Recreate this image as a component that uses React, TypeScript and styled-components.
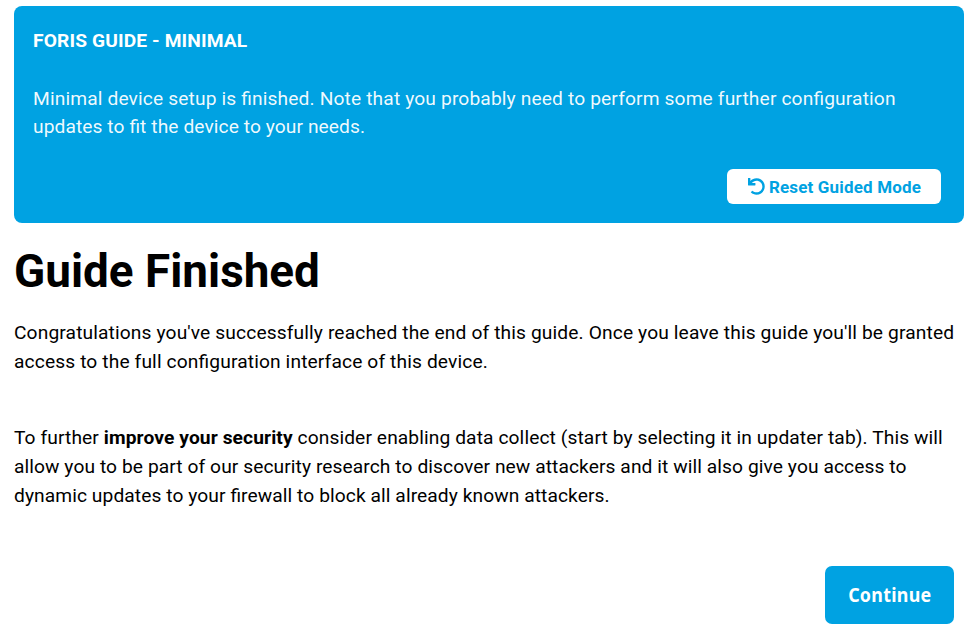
import React from "react";
import styled, { createGlobalStyle } from "styled-components";
import { FaUndo } from "react-icons/fa";

const Global = createGlobalStyle`
  body {
    margin: 0; background: #fff; color: #000;
    font-family: Roboto, sans-serif; font-size: 19.2px;
    font-feature-settings: "liga" 1;
  }
`;
const Page = styled.main`
  box-sizing: border-box; width: 979px; height: 641px; padding: 6px 15px 0 14px; overflow: hidden;
`;
const Panel = styled.section`
  box-sizing: border-box; height: 217px; padding: 20px 23px 19px 19px;
  display: flex; flex-direction: column; border-radius: 8px; background: #00a2e2; color: #fff;
`;
const PanelTitle = styled.div`
  font-weight: 700; letter-spacing: 0.12px; line-height: 29px; text-transform: uppercase;
`;
const PanelText = styled.p`
  margin: 30px 0 0; line-height: 28px; letter-spacing: 0.137px; white-space: nowrap;
  color: rgba(255, 255, 255, 0.95);
`;
const TightLine = styled.span`
  letter-spacing: 0.08px;
`;
const ResetButton = styled.button`
  display: flex; align-items: center; justify-content: center; gap: 4px;
  align-self: flex-end; margin-top: auto; width: 214px; height: 35px; padding: 0 0 0 1px;
  border: 0; border-radius: 6px; background: #fff; color: #00a2e2;
  font: 700 17px Roboto, sans-serif; letter-spacing: 0.16px; white-space: nowrap;
`;
const Title = styled.h1`
  margin: 20px 0 0; font-size: 45.85px; line-height: 56px; font-weight: 700;
`;
const Paragraph = styled.p<{ $gap: number; $spacing: number }>`
  margin: ${(p) => p.$gap}px 0 0; line-height: 29px; white-space: nowrap;
  letter-spacing: ${(p) => p.$spacing}px;
`;
const Actions = styled.div`
  display: flex; justify-content: flex-end; padding: 56px 10px 0 0;
`;
const ContinueButton = styled.button`
  width: 129px; height: 58px; padding: 0 0 1px; border: 0; border-radius: 7px;
  background: #00a2e2; color: #fff; font: 700 19.2px "Noto Sans", sans-serif;
`;
const ContinueLabel = styled.span`
  display: inline-block; letter-spacing: 0.3px; transform: scaleX(0.93);
`;

export default function App() {
  return (
    <Page>
      <Global />
      <Panel>
        <PanelTitle>Foris guide - minimal</PanelTitle>
        <PanelText>
          Minimal device setup is finished. Note that you probably need to perform some further configuration<br />
          <TightLine>updates to fit the device to your needs.</TightLine>
        </PanelText>
        <ResetButton>
          <FaUndo size={17} />
          Reset Guided Mode
        </ResetButton>
      </Panel>
      <Title>Guide Finished</Title>
      <Paragraph $gap={19} $spacing={0.127}>
        Congratulations you've successfully reached the end of this guide. Once you leave this guide you'll be granted<br />
        access to the full configuration interface of this device.
      </Paragraph>
      <Paragraph $gap={47} $spacing={0.1}>
        To further <strong>improve your security</strong> consider enabling data collect (start by selecting it in updater tab). This will<br />
        <TightLine>
          allow you to be part of our security research to discover new attackers and it will also give you access to<br />
          dynamic updates to your firewall to block all already known attackers.
        </TightLine>
      </Paragraph>
      <Actions><ContinueButton><ContinueLabel>Continue</ContinueLabel></ContinueButton></Actions>
    </Page>
  );
}
